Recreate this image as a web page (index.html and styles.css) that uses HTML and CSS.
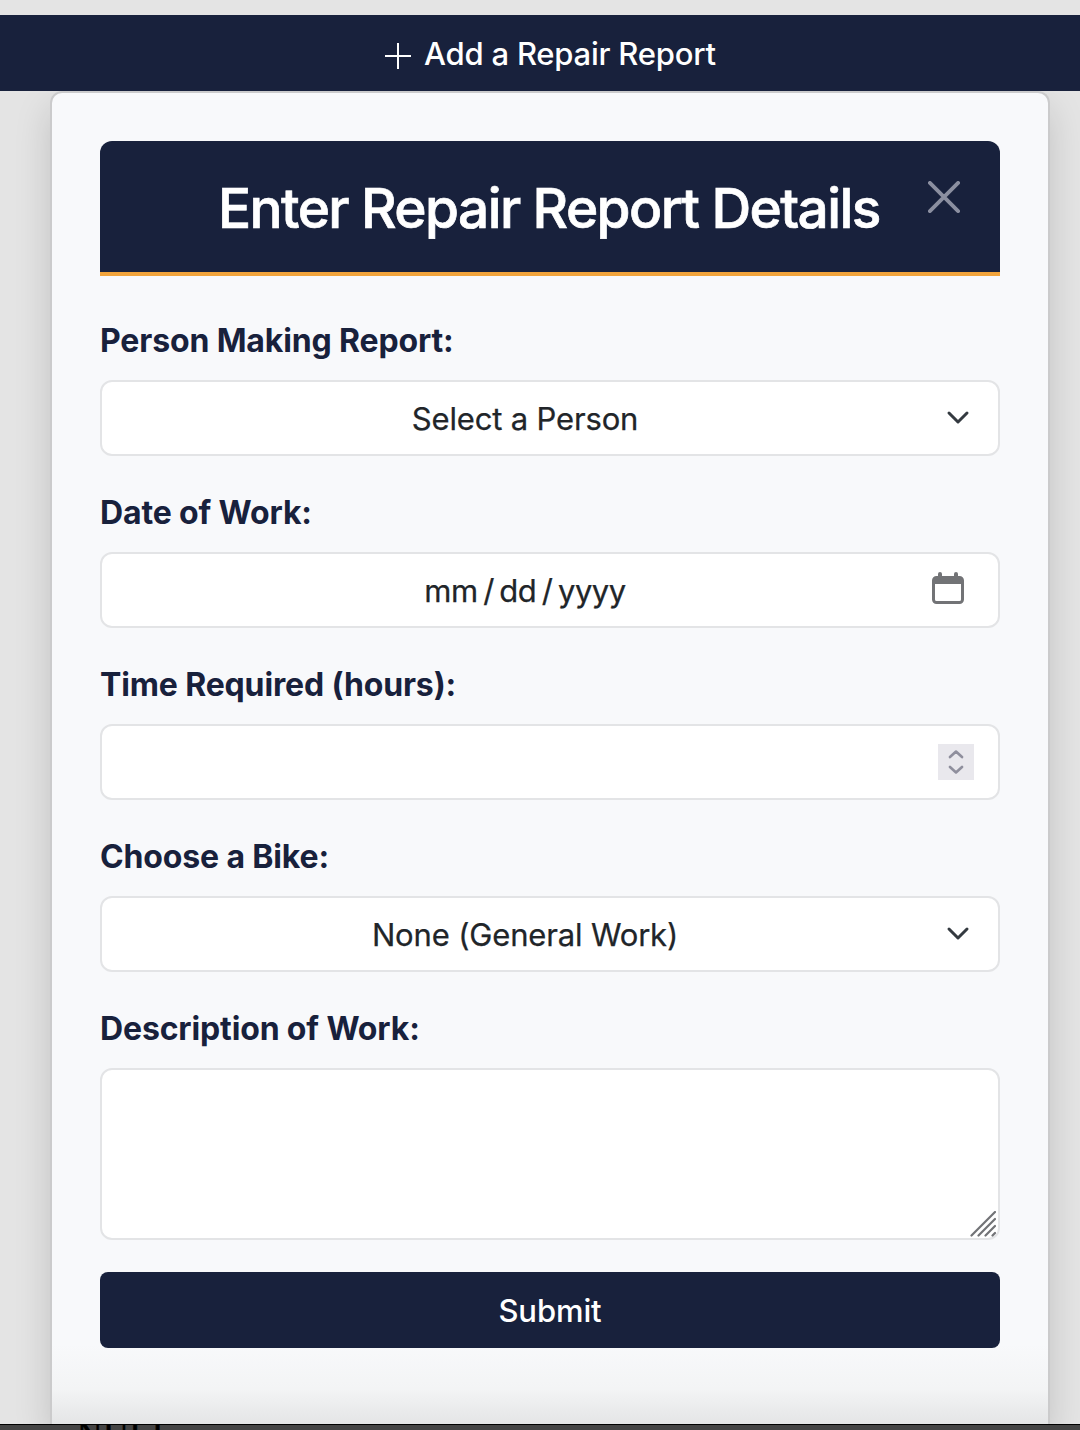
FILE: index.html
```html
<!DOCTYPE html>
<html lang="en">
<head>
<meta charset="utf-8">
<title>Add a Repair Report</title>
<link rel="stylesheet" href="styles.css">
</head>
<body>
<div class="page">
  <div class="toolbar">
    <svg class="plus" width="26" height="26" viewBox="0 0 26 26"><path d="M13 0v26M0 13h26" stroke="#fff" stroke-width="2"/></svg>
    <span class="toolbar-text">Add a Repair Report</span>
  </div>
  <main class="card">
    <header class="card-header">
      <h1 class="title">Enter Repair Report Details</h1>
      <svg class="close" width="32" height="32" viewBox="0 0 32 32"><path d="M1.9 1.9l28.200 28.200M30.100 1.900L1.900 30.100" stroke="#8b8fa0" stroke-width="3.800" stroke-linecap="round"/></svg>
    </header>
    <form class="form">
      <div class="group">
        <div class="label">Person Making Report:</div>
        <div class="field">
          <span class="value">Select a Person</span>
          <svg class="chevron" width="24" height="16" viewBox="0 0 24 16"><path d="M3 3l9 9 9-9" fill="none" stroke="#343a40" stroke-width="3" stroke-linecap="round" stroke-linejoin="round"/></svg>
        </div>
      </div>
      <div class="group">
        <div class="label">Date of Work:</div>
        <div class="field">
          <span class="value date"><span>mm</span><span>/</span><span>dd</span><span>/</span><span>yyyy</span></span>
          <svg class="calendar" width="32" height="32" viewBox="0 0 32 32"><path d="M4.500 4H6V2a2 2 0 0 1 4 0v2h12V2a2 2 0 0 1 4 0v2h1.500A4.500 4.500 0 0 1 32 8.500v19a4.500 4.500 0 0 1-4.500 4.500h-23A4.500 4.500 0 0 1 0 27.500v-19A4.500 4.500 0 0 1 4.500 4zM3 12v15.500A1.500 1.500 0 0 0 4.500 29h23a1.500 1.500 0 0 0 1.500-1.500V12z" fill="#727376" fill-rule="evenodd"/></svg>
        </div>
      </div>
      <div class="group">
        <div class="label">Time Required (hours):</div>
        <div class="field">
          <svg class="stepper" width="36" height="36" viewBox="0 0 36 36"><rect width="36" height="36" fill="#e9e8ed"/><path d="M12 13l6-5.500 6 5.500M12 23l6 5.500 6-5.500" fill="none" stroke="#8f8f9d" stroke-width="2.600" stroke-linecap="round" stroke-linejoin="round"/></svg>
        </div>
      </div>
      <div class="group">
        <div class="label">Choose a Bike:</div>
        <div class="field">
          <span class="value">None (General Work)</span>
          <svg class="chevron" width="24" height="16" viewBox="0 0 24 16"><path d="M3 3l9 9 9-9" fill="none" stroke="#343a40" stroke-width="3" stroke-linecap="round" stroke-linejoin="round"/></svg>
        </div>
      </div>
      <div class="group">
        <div class="label">Description of Work:</div>
        <div class="field area">
          <svg class="grip" width="26" height="26" viewBox="0 0 26 26"><path d="M1.500 24.500L25 1M8.500 24.500L25 8M15.500 24.500L25 15M22.500 24.500L25 22" stroke="#727376" stroke-width="2.200" stroke-linecap="round"/></svg>
        </div>
      </div>
      <div class="submit">Submit</div>
    </form>
  </main>
  <footer class="edge"><span class="edge-text">NULL</span></footer>
</div>
</body>
</html>
```
FILE: styles.css
```css
* { box-sizing: border-box; }
body {
  margin: 0;
  background: #e4e4e4;
  font-family: Inter, "Liberation Sans", sans-serif;
  color: #212529;
}
svg { display: block; flex: none; }
.page {
  height: 1430px;
  padding-top: 15px;
  display: flex;
  flex-direction: column;
  overflow: hidden;
}
.toolbar {
  position: relative;
  z-index: 1;
  flex: none;
  height: 76px;
  display: flex;
  align-items: center;
  padding-left: 385px;
  gap: 13px;
  background: #18213c;
  color: #fff;
  font-size: 31px;
  font-weight: 500;
  letter-spacing: -.22px;
  white-space: nowrap;
}
.plus { margin-top: 6px; }
.toolbar-text { line-height: 40px; margin-top: 2px; }
.card {
  flex: 1;
  min-height: 0;
  margin: 0 30px 0 50px;
  border: 2px solid #cbcbcc;
  border-bottom: 0;
  border-radius: 12px 12px 0 0;
  width: 1000px;
  padding: 48px;
  background: linear-gradient(to bottom, #f8f9fb calc(100% - 80px), #f3f4f5 calc(100% - 35px), #e4e5e6);
  box-shadow: 0 16px 36px rgba(0, 0, 0, .15);
}
.card-header {
  height: 135px;
  display: flex;
  align-items: flex-start;
  padding-left: 118px;
  padding-right: 40px;
  justify-content: space-between;
  border-bottom: 4px solid #f2a43b;
  border-radius: 12px 12px 0 0;
  background: #18213c;
}
.title {
  margin: 34px 0 0;
  color: #fff;
  font-size: 55px;
  font-weight: 500;
  line-height: 67px;
  letter-spacing: -1.6px;
  -webkit-text-stroke: .7px #fff;
  white-space: nowrap;
}
.close { margin-top: 40px; }
.form { padding-top: 40px; }
.group { margin-bottom: 32px; }
.label {
  height: 50px;
  line-height: 50px;
  margin-bottom: 14px;
  color: #18213c;
  font-size: 32px;
  font-weight: 700;
  letter-spacing: -.14px;
  white-space: nowrap;
}
.field {
  height: 76px;
  display: flex;
  align-items: center;
  justify-content: flex-end;
  border: 2px solid #e3e4e6;
  border-radius: 12px;
  background: #fff;
  font-size: 31px;
}
.value {
  flex: 1;
  text-align: center;
  padding: 2px 0 0 22px;
  line-height: 40px;
  letter-spacing: -.16px;
  -webkit-text-stroke: .25px #212529;
  white-space: nowrap;
}
.chevron { margin: 0 28px 0 20px; }
.date {
  display: flex;
  justify-content: center;
  gap: 5.5px;
  padding-left: 20px;
  letter-spacing: -.5px;
}
.calendar { margin: 0 34px 4px 4px; }
.stepper { margin-right: 24px; }
.area { height: 172px; align-items: flex-end; }
.grip { margin: 0 2px 1px 0; }
.submit {
  height: 76px;
  display: flex;
  align-items: center;
  justify-content: center;
  border-radius: 8px;
  background: #18213c;
  color: #fff;
  font-size: 31px;
  font-weight: 500;
  letter-spacing: -.1px;
}
.edge {
  flex: none;
  height: 6px;
  border-top: 1px solid #000;
  background: #444;
  overflow: hidden;
  padding-left: 77px;
}
.edge-text {
  display: block;
  font: 35px/36px "Liberation Serif", serif;
  letter-spacing: 1px;
  margin-top: -7px;
  color: #000;
  -webkit-text-stroke: .6px #000;
}
```
